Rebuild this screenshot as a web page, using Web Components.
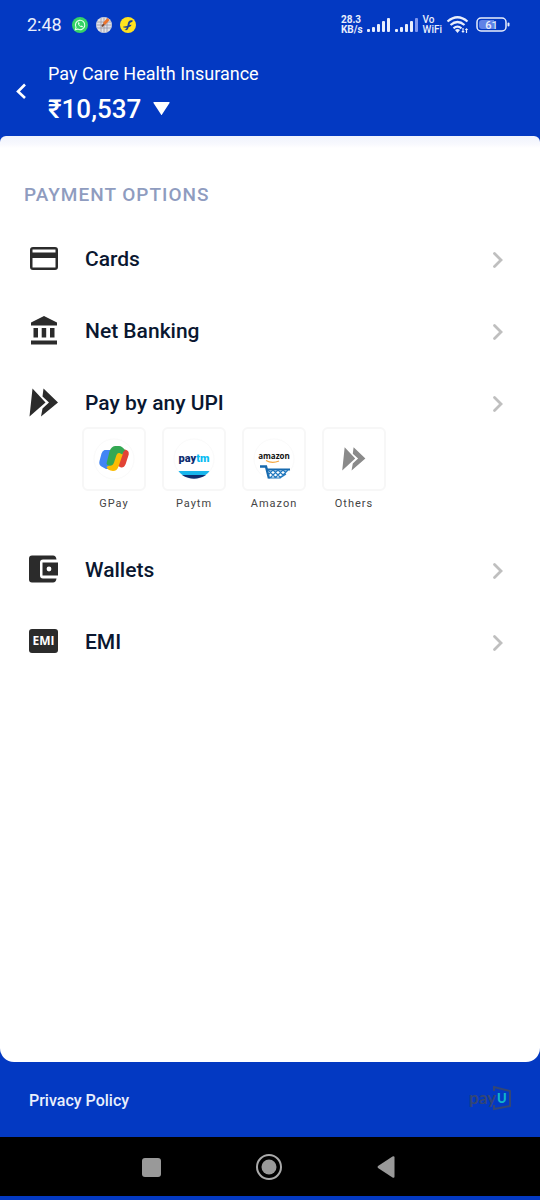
<!DOCTYPE html>
<html lang="en">
<head>
<meta charset="utf-8">
<meta name="viewport" content="width=device-width, initial-scale=1">
<title>Payment options</title>
<style>
html{background:#0339c2}
body{margin:0;font-family:Roboto,"Liberation Sans",sans-serif;color:#0a1730}
</style>
</head>
<body>
<pay-app></pay-app>
<script>
const define = (name, html) => customElements.define(name, class extends HTMLElement {
  constructor() {
    super();
    const t = document.createElement('template');
    t.innerHTML = html;
    this.attachShadow({ mode: 'open' }).append(t.content.cloneNode(true));
  }
});

define('status-bar', `
<style>
:host{display:flex;align-items:center;justify-content:space-between;height:50px;padding:0 30px 0 27px;color:#e9eefc}
div{display:flex;align-items:center}
svg{display:block;flex:none}
.time{font-size:18px;line-height:26px;margin-right:10px}
.apps{gap:8px}
.two{display:block;font-size:10px;line-height:10px;font-weight:700}
.two span{display:block}
.right{gap:4px}
.vo{font-weight:500}
.battery{margin-left:2px}
</style>
<div><span class="time">2:48</span>
 <div class="apps">
 <svg width="16" height="16" viewBox="0 0 16 16"><circle cx="8" cy="8" r="8" fill="#35d366"/><path d="M3.3 12.8l.7-2.5a4.7 4.7 0 1 1 1.8 1.8z" fill="none" stroke="#e8fff0" stroke-width="1.1"/><path d="M6 5.5c-.5 2.3 2.200 5 4.500 4.700l.5-1-1.500-.7-.7.6c-.8-.3-1.300-.9-1.700-1.700l.6-.6-.6-1.500z" fill="#e8fff0"/></svg>
 <svg width="16" height="16" viewBox="0 0 16 16"><circle cx="8" cy="8" r="8" fill="#e2e2e8"/><path d="M1 5h14M0 8h16M1 11h14M5 1v14M8 0v16M11 1v14" stroke="#9999a5" stroke-width=".8"/><path d="M12.500 2L8 7" stroke="#ed742c" stroke-width="3"/><path d="M8 7l-2 2.500" stroke="#754734" stroke-width="2"/></svg>
 <svg width="16" height="16" viewBox="0 0 16 16"><circle cx="8" cy="8" r="8" fill="#ffe21f"/><path d="M12.800 3.500c-3-.9-4.500.6-5 3.300l-.5 2.200-4.300.8c.5 1 1.800 1 3.700.7-.4 1.700-1 2-2.200 2 .8 1.200 2.500 1 3.300-.3.5-.7.7-1.500 1-2.200 1.500-.3 2.500-1 2.700-2.300l-2 .4c.3-2.300 1-3 2.700-3z" fill="#173d99"/></svg>
 </div>
</div>
<div class="right">
 <div class="two"><span>28.3</span><span>KB/s</span></div>
 <svg width="24" height="16" viewBox="0 0 24 16" fill="#e9eefc"><rect y="12" width="3" height="3" rx="1"/><rect x="5" y="10" width="3" height="5" rx="1"/><rect x="10" y="7" width="3" height="8" rx="1"/><rect x="15" y="4" width="3" height="11" rx="1"/><rect x="20" y="1" width="3" height="14" rx="1"/></svg>
 <svg width="24" height="16" viewBox="0 0 24 16" fill="#e9eefc"><rect y="12" width="3" height="3" rx="1"/><rect x="5" y="10" width="3" height="5" rx="1"/><rect x="10" y="7" width="3" height="8" rx="1"/><rect x="15" y="4" width="3" height="11" rx="1"/><rect x="20" y="1" width="3" height="14" rx="1" fill="#7f97f0"/></svg>
 <div class="two vo"><span>Vo</span><span>WiFi</span></div>
 <svg width="24" height="20" viewBox="0 0 24 20" fill="none" stroke="#e9eefc" stroke-width="2.200"><path d="M1.500 6.500q10-8.500 20 0M4.500 10q7-6 14 0M7.500 13.300q4-3.300 8 0"/><path d="M9 15q2.500-2 5 0l-2.500 3z" fill="#e9eefc" stroke="none"/><path d="M17 13v4M20.500 18v-4" stroke-width="1.200"/><path d="M15.300 16l1.700 2 1.700-2zM18.800 15l1.700-2 1.700 2z" fill="#e9eefc" stroke="none"/></svg>
 <svg class="battery" width="34" height="18" viewBox="0 0 34 18"><rect x="1" y="2" width="29" height="13" rx="4" fill="none" stroke="#e9eefc" stroke-width="1.500"/><path d="M6 4h12v9H6a3 3 0 0 1-3-3V7a3 3 0 0 1 3-3z" fill="#5f82e6"/><rect x="31.500" y="6.500" width="2" height="4" rx="1" fill="#e9eefc"/><text x="15.500" y="12.500" text-anchor="middle" font-family="Roboto" font-size="11" font-weight="500" fill="#e9eefc">61</text></svg>
</div>`);

define('pay-header', `
<style>
:host{display:flex;align-items:flex-start;height:78px;padding:8px 16px 0;color:#fff}
button{appearance:none;background:none;border:0;margin:0;padding:0;color:inherit;font:inherit;display:flex;align-items:center;text-align:left}
svg{display:block}
.back{width:32px;height:66px;flex:none}
h1{margin:0;font-size:18px;line-height:32px;font-weight:400}
.amount{font-size:26px;line-height:38px;font-weight:500;gap:12px}
</style>
<button class="back" aria-label="Back"><svg width="12" height="18" viewBox="0 0 12 18"><path d="M9 2.500L2 9.500l7 6.500" fill="none" stroke="#fff" stroke-width="2.600"/></svg></button>
<div><h1>Pay Care Health Insurance</h1>
<button class="amount">₹10,537<svg width="17" height="14" viewBox="0 0 17 14"><path d="M1 0h15q1 0 .5 1L9 12.500q-.5 1-1 0L.5 1Q0 0 1 0z" fill="#fff"/></svg></button></div>`);

define('pay-option', `
<style>
:host{display:block}
button{appearance:none;box-sizing:border-box;width:100%;height:48px;background:none;border:0;margin:0;padding:0 36px 0 28px;color:inherit;font:500 21px/28px Roboto,sans-serif;display:flex;align-items:center;text-align:left}
.icon{width:32px;height:32px;margin-right:25px}
.label{flex:1}
svg{display:block;margin-top:2px}
.more{padding-left:82px}
</style>
<button><span class="icon"><slot name="icon"></slot></span><span class="label"><slot></slot></span>
<svg width="12" height="18" viewBox="0 0 12 18"><path d="M2.500 2.500L9 9l-6.500 6.500" fill="none" stroke="#bfbfbf" stroke-width="2.800" stroke-linecap="round"/></svg></button>
<div class="more"><slot name="more"></slot></div>`);

define('upi-app', `
<style>
:host{display:block;width:64px}
button{appearance:none;background:none;border:0;margin:0;padding:0;display:block;width:100%;color:#444;font:400 11px/16px Roboto,sans-serif;letter-spacing:1px;text-align:center}
.tile{box-sizing:border-box;display:flex;align-items:center;justify-content:center;height:64px;border:2px solid #f7f7f7;border-radius:6px;margin-bottom:5px}
</style>
<button><span class="tile"><slot name="logo"></slot></span><slot></slot></button>`);

define('payment-sheet', `
<style>
:host{display:block;background:linear-gradient(#f0f3fc 0,#f8f9fe 8px,#fff 12px);border-radius:6px 6px 14px 14px;padding:47px 0 24px}
h2{margin:0 0 28px 24px;color:#8f9cbf;font-size:19px;line-height:24px;font-weight:500;letter-spacing:1px}
.list{display:grid;gap:24px}
.apps{display:flex;gap:16px;padding-bottom:10px}
svg{display:block}
</style>
<h2>PAYMENT OPTIONS</h2>
<div class="list">
<pay-option><svg slot="icon" width="32" height="32" viewBox="0 0 32 32"><path fill-rule="evenodd" fill="#2b2b2b" d="M5 4h22a3 3 0 0 1 3 3v17a3 3 0 0 1-3 3H5a3 3 0 0 1-3-3V7a3 3 0 0 1 3-3zM4.500 6.500v3h23v-3zM4.500 15v9.500h23V15z"/></svg>Cards</pay-option>
<pay-option><svg slot="icon" width="32" height="32" viewBox="0 0 32 32"><path fill="#2b2b2b" d="M16 1L29 7.500V10.500H3V7.500zM5.500 13H10v9.500H5.500zM13.700 13h4.500v9.500h-4.500zM22 13h4.500v9.500H22zM3 25.500h26v4H3z"/></svg>Net Banking</pay-option>
<pay-option><svg slot="icon" width="32" height="32" viewBox="0 0 32 32"><path fill="#2b2b2b" d="M4.500 1.500L17.500 15.500 1.500 29.500zM15.500 1.500l14.500 14L13 29.500l1.500-8 6.500-6-6.500-6z"/></svg>Pay by any UPI
 <div slot="more" class="apps">
 <upi-app><svg slot="logo" width="44" height="44" viewBox="0 0 44 44"><circle cx="22" cy="22" r="20" fill="none" stroke="#fafafa"/><path fill="#e24335" d="M29 12.500h4q4.500 1 3.700 5l-3 9.500q-1.700 4-4.700 3.500l-4-2z"/><path fill="#4285f4" d="M12.500 13H18l3 2-5 17h-2l-4.500-2.500q-3-2-2-5.500l2-7.500q1-3 3-3.500z"/><path fill="#fbbc04" d="M24 15l7 1.500-4.500 13q-1.500 4.500-5.500 4.500-5.500-.5-6.500-4l3-2z"/><path fill="#34a853" d="M23 9h4q3.500 0 6 4.500-2 .5-2.500 4l-3-1.500q-2-.5-3 2l-2.500 7.500q-1.500 4-5.500 3-1.500-.5-2-2l3-12q1.500-5 5.500-5.500z"/></svg>GPay</upi-app>
 <upi-app><svg slot="logo" width="44" height="44" viewBox="0 0 44 44"><circle cx="22" cy="22" r="20" fill="none" stroke="#fafafa"/><text x="22" y="25" text-anchor="middle" font-family="Roboto,sans-serif" font-size="11" font-weight="900" letter-spacing="0" fill="#0c2d70">pay<tspan fill="#0abcf2">tm</tspan></text><path d="M6.500 34h31q-1.500 2.500-4 4H10.500q-2.500-1.500-4-4z" fill="#18b5ec"/><path d="M10 38h24q-12 7.500-24 0z" fill="#0c2d70"/></svg>Paytm</upi-app>
 <upi-app><svg slot="logo" width="44" height="44" viewBox="0 0 44 44"><circle cx="22" cy="22" r="20" fill="none" stroke="#fafafa"/><text x="22" y="22" text-anchor="middle" font-family="Open Sans,sans-serif" font-size="8" font-weight="700" letter-spacing="0" fill="#111">amazon</text><path d="M14 23.500q6 3.500 13 .5" fill="none" stroke="#f5a742" stroke-width="1.300"/><path d="M8 29.500h6l3 12" fill="none" stroke="#1769ad" stroke-width="2.400"/><path d="M14 32.500h24" stroke="#1769ad" stroke-width="2"/><path d="M16 33l8 8M21 33l8 8M26 33l6 6M31 33l3 3M21 33l-5 5M26 33l-8 8M31 33l-8 8M36 33l-8 8M17 41h11l6-4" fill="none" stroke="#2178be" stroke-width="1.200"/></svg>Amazon</upi-app>
 <upi-app><svg slot="logo" width="26" height="26" viewBox="0 0 32 32"><path fill="#8a8a8a" d="M4.500 1.500L17.500 15.500 1.500 30zM15.500 1.500l14.500 14L13 30l1.500-8.500 6.500-6-6.500-6z"/></svg>Others</upi-app>
 </div></pay-option>
<pay-option><svg slot="icon" width="32" height="32" viewBox="0 0 32 32"><path fill="#2b2b2b" d="M4 1.500h21q3 0 3.500 4H15q-3 0-3 3v13q0 3 3 3h13.500q-.5 4-3.500 4H4q-3 0-3-3v-21q0-3 3-3z"/><path fill="#2b2b2b" d="M14.500 8.500H30v13H14.500z"/><circle cx="21" cy="15" r="2.400" fill="#fff"/></svg>Wallets</pay-option>
<pay-option><svg slot="icon" width="32" height="32" viewBox="0 0 32 32"><rect x="1" y="3" width="29" height="24" rx="3" fill="#2b2b2b"/><text x="15.500" y="19" text-anchor="middle" font-family="Open Sans,sans-serif" font-size="12" font-weight="700" fill="#fff">EMI</text></svg>EMI</pay-option>
</div>`);

define('pay-footer', `
<style>
:host{display:flex;align-items:center;justify-content:space-between;height:75px;padding:0 28px 0 29px}
a{color:#e9effc;font-size:16px;line-height:24px;font-weight:500;text-decoration:none;padding-top:3px}
svg{display:block}
</style>
<a href="#privacy">Privacy Policy</a>
<svg width="43" height="30" viewBox="0 0 43 30"><text x="0" y="19" font-family="Lato,sans-serif" font-size="17" font-weight="700" fill="#334675">pay</text><path d="M25 6V2l16 4v15l-16 3v-4" fill="none" stroke="#334675" stroke-width="2"/><text x="28" y="18" font-family="Lato,sans-serif" font-size="13" font-weight="900" fill="#10b5c9">U</text></svg>`);

define('system-nav', `
<style>
:host{display:flex;align-items:center;justify-content:center;gap:91px;height:59px;padding-right:2px;background:#000;border-bottom:4px solid #0339c2}
button{appearance:none;background:none;border:0;margin:0;padding:0;width:26px;height:26px;display:block}
svg{display:block}
</style>
<button aria-label="Recent apps"><svg width="26" height="26"><rect x="3" y="4" width="19" height="19" rx="3" fill="#999"/></svg></button>
<button aria-label="Home"><svg width="26" height="26"><circle cx="13" cy="13" r="12" fill="none" stroke="#aaa" stroke-width="2"/><circle cx="13" cy="13" r="7.500" fill="#999"/></svg></button>
<button aria-label="Back"><svg width="26" height="26"><path d="M19.500 2.500q2-1 2 1v19q0 2-2 1L5 14q-1-1 0-2z" fill="#999"/></svg></button>`);

define('pay-app', `
<style>
:host{display:flex;flex-direction:column;min-height:100vh;background:#0339c2}
payment-sheet{flex:1}
</style>
<status-bar></status-bar><pay-header></pay-header><payment-sheet></payment-sheet><pay-footer></pay-footer><system-nav></system-nav>`);
</script>
</body>
</html>
